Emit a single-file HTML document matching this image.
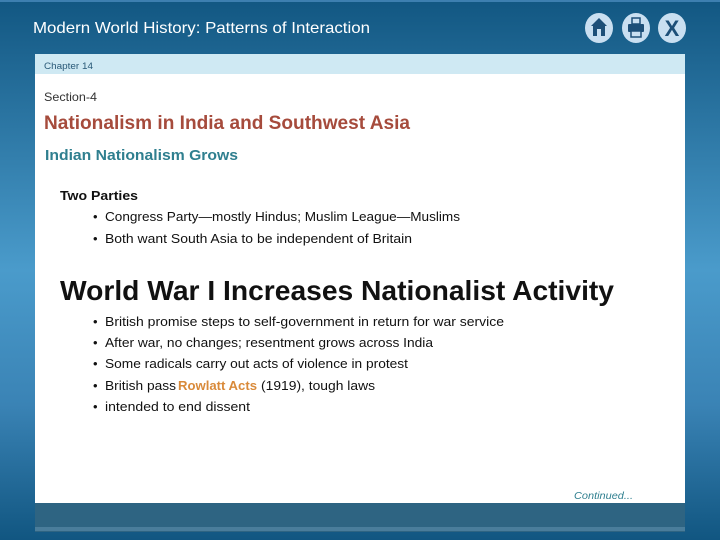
<!DOCTYPE html>
<html><head><meta charset="utf-8"><style>
html,body{margin:0;padding:0;width:720px;height:540px;overflow:hidden}
svg{display:block}
text{font-family:"Liberation Sans",sans-serif}
</style></head><body>
<svg width="720" height="540" viewBox="0 0 720 540" xmlns="http://www.w3.org/2000/svg">
<defs>
<linearGradient id="bg" x1="0" y1="0" x2="0" y2="1">
<stop offset="0" stop-color="#125782"/>
<stop offset="0.5" stop-color="#4a9bcb"/>
<stop offset="0.75" stop-color="#3a83b5"/>
<stop offset="1" stop-color="#115681"/>
</linearGradient>
</defs>
<rect width="720" height="540" fill="url(#bg)"/>
<rect x="0" y="0" width="720" height="2" fill="#3d7fb0"/>
<text x="33" y="33" font-size="16" fill="#fff" textLength="337" lengthAdjust="spacingAndGlyphs">Modern World History: Patterns of Interaction</text>
<!-- icons -->
<g fill="#c9dff1"><ellipse cx="599" cy="28" rx="14" ry="15"/><ellipse cx="636" cy="28" rx="14" ry="15"/><ellipse cx="672" cy="28" rx="14" ry="15"/></g>
<g fill="#1d4f78">
<path d="M599 18 L591 26 L593 26 L593 36 L605 36 L605 26 L607 26 Z"/>
<rect x="597" y="29" width="4" height="7" fill="#c9dff1"/>
<rect x="632" y="18" width="8" height="6" fill="none" stroke="#1d4f78" stroke-width="1.5"/>
<rect x="628" y="24" width="16" height="8" rx="1"/>
<rect x="631" y="31" width="10" height="6" fill="#c9dff1" stroke="#1d4f78" stroke-width="1.5"/>
</g>
<text x="672" y="36" font-size="22" font-weight="bold" fill="#1d4f78" text-anchor="middle">X</text>
<!-- panel -->
<rect x="35" y="54" width="650" height="20" fill="#cfe9f3"/>
<rect x="35" y="74" width="650" height="429" fill="#fff"/>
<rect x="35" y="503" width="650" height="29" fill="#2e6482"/>
<rect x="35" y="527" width="650" height="4" fill="#4a7d9b"/>
<text x="44" y="69" font-size="9" fill="#2a5a78" textLength="49" lengthAdjust="spacingAndGlyphs">Chapter 14</text>
<text x="44" y="101" font-size="12" fill="#333" textLength="53" lengthAdjust="spacingAndGlyphs">Section-4</text>
<text x="44" y="129" font-size="19" font-weight="bold" fill="#a64b3c" textLength="366" lengthAdjust="spacingAndGlyphs">Nationalism in India and Southwest Asia</text>
<text x="45" y="160" font-size="15" font-weight="bold" fill="#2f7f8f" textLength="193" lengthAdjust="spacingAndGlyphs">Indian Nationalism Grows</text>
<text x="60" y="200" font-size="13" font-weight="bold" fill="#111" textLength="78" lengthAdjust="spacingAndGlyphs">Two Parties</text>
<g font-size="13" fill="#111">
<text x="93" y="221">•</text><text x="105" y="221" textLength="355" lengthAdjust="spacingAndGlyphs">Congress Party—mostly Hindus; Muslim League—Muslims</text>
<text x="93" y="243">•</text><text x="105" y="243" textLength="307" lengthAdjust="spacingAndGlyphs">Both want South Asia to be independent of Britain</text>
</g>
<text x="60" y="300" font-size="28" font-weight="bold" fill="#111" textLength="554" lengthAdjust="spacingAndGlyphs">World War I Increases Nationalist Activity</text>
<g font-size="13" fill="#111">
<text x="93" y="326">•</text><text x="105" y="326" textLength="399" lengthAdjust="spacingAndGlyphs">British promise steps to self-government in return for war service</text>
<text x="93" y="347">•</text><text x="105" y="347" textLength="328" lengthAdjust="spacingAndGlyphs">After war, no changes; resentment grows across India</text>
<text x="93" y="368">•</text><text x="105" y="368" textLength="303" lengthAdjust="spacingAndGlyphs">Some radicals carry out acts of violence in protest</text>
<text x="93" y="390">•</text><text x="105" y="390" textLength="71" lengthAdjust="spacingAndGlyphs">British pass</text>
<text x="178" y="390" font-weight="bold" fill="#d98a3a" textLength="79" lengthAdjust="spacingAndGlyphs">Rowlatt Acts</text>
<text x="261" y="390" textLength="114" lengthAdjust="spacingAndGlyphs">(1919), tough laws</text>
<text x="93" y="411">•</text><text x="105" y="411" textLength="145" lengthAdjust="spacingAndGlyphs">intended to end dissent</text>
</g>
<text x="574" y="499" font-size="10" font-style="italic" fill="#2f7f8f" textLength="59" lengthAdjust="spacingAndGlyphs">Continued...</text>
</svg>
</body></html>
